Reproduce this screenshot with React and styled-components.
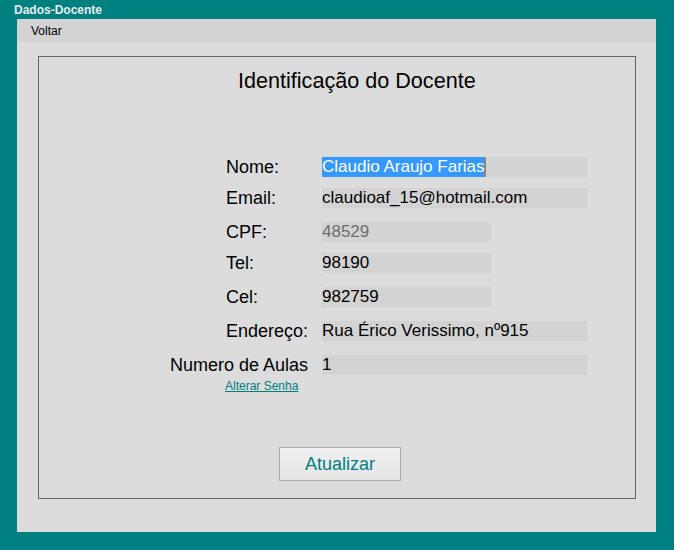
import React from 'react';
import styled, { createGlobalStyle } from 'styled-components';

const GlobalStyle = createGlobalStyle`
  html, body {
    margin: 0;
    padding: 0;
    background: #008080;
    font-family: "Liberation Sans", Arial, sans-serif;
  }
`;

const Frame = styled.div`
  width: 674px;
  height: 550px;
  background: #008080;
  overflow: hidden;
`;

const TitleBar = styled.div`
  height: 19px;
  padding-left: 14px;
  display: flex;
  align-items: center;
  font-size: 12px;
  font-weight: bold;
  color: #e6eeee;
`;

const Client = styled.div`
  margin-left: 17px;
  width: 639px;
  height: 513px;
  background: #dcdcdc;
  display: flex;
  flex-direction: column;
`;

const MenuStrip = styled.div`
  height: 23px;
  background: #d3d3d3;
  display: flex;
  align-items: center;
  padding-left: 14px;
  font-size: 12px;
  color: #000;
`;

const Panel = styled.div`
  margin: 14px 0 0 21px;
  width: 596px;
  height: 441px;
  border: 1px solid #646464;
  display: flex;
  flex-direction: column;
`;

const Heading = styled.h1`
  margin: 11px 0 0 199px;
  font-weight: normal;
  font-size: 21.6px;
  line-height: 25px;
  color: #000;
  white-space: nowrap;
`;

const Form = styled.div`
  margin-top: 64px;
  margin-left: 131px;
  display: flex;
  flex-direction: column;
`;

const Row = styled.div`
  display: flex;
  align-items: center;
  height: 20px;
  margin-top: ${p => p.$gap || 0}px;
`;

const Label = styled.span`
  width: 152px;
  box-sizing: border-box;
  padding-left: ${p => (p.$flush ? 0 : 56)}px;
  font-size: 18px;
  color: #000;
  white-space: nowrap;
`;

const Field = styled.div`
  width: ${p => p.$w}px;
  height: 20px;
  background: #d3d3d3;
  font-size: 17px;
  line-height: 20px;
  color: ${p => (p.$muted ? '#6d6d6d' : '#000')};
  white-space: nowrap;
`;

const Selected = styled.span`
  background: #3399ff;
  color: #fff;
  display: inline-block;
  height: 20px;
  border-right: 1px solid #e07000;
`;

const Link = styled.a`
  margin: 4px 0 0 55px;
  font-size: 12px;
  color: #008080;
  text-decoration: underline;
  cursor: pointer;
`;

const Button = styled.button`
  margin: 54px 0 0 240px;
  width: 122px;
  height: 34px;
  border: 1px solid #adadad;
  background: linear-gradient(#f0f0f0, #e5e5e5);
  font-family: "Liberation Sans", Arial, sans-serif;
  font-size: 18px;
  color: #008080;
  padding: 0;
`;

export default function App() {
  return (
    <Frame>
      <GlobalStyle />
      <TitleBar>Dados-Docente</TitleBar>
      <Client>
        <MenuStrip>Voltar</MenuStrip>
        <Panel>
          <Heading>Identificação do Docente</Heading>
          <Form>
            <Row>
              <Label>Nome:</Label>
              <Field $w={265}>
                <Selected>Claudio Araujo Farias</Selected>
              </Field>
            </Row>
            <Row $gap={11}>
              <Label>Email:</Label>
              <Field $w={265}>claudioaf_15@hotmail.com</Field>
            </Row>
            <Row $gap={14}>
              <Label>CPF:</Label>
              <Field $w={169} $muted>48529</Field>
            </Row>
            <Row $gap={11}>
              <Label>Tel:</Label>
              <Field $w={169}>98190</Field>
            </Row>
            <Row $gap={14}>
              <Label>Cel:</Label>
              <Field $w={169}>982759</Field>
            </Row>
            <Row $gap={14}>
              <Label>Endereço:</Label>
              <Field $w={265}>Rua Érico Verissimo, nº915</Field>
            </Row>
            <Row $gap={14}>
              <Label $flush>Numero de Aulas</Label>
              <Field $w={265}>1</Field>
            </Row>
            <Link>Alterar Senha</Link>
          </Form>
          <Button>Atualizar</Button>
        </Panel>
      </Client>
    </Frame>
  );
}
